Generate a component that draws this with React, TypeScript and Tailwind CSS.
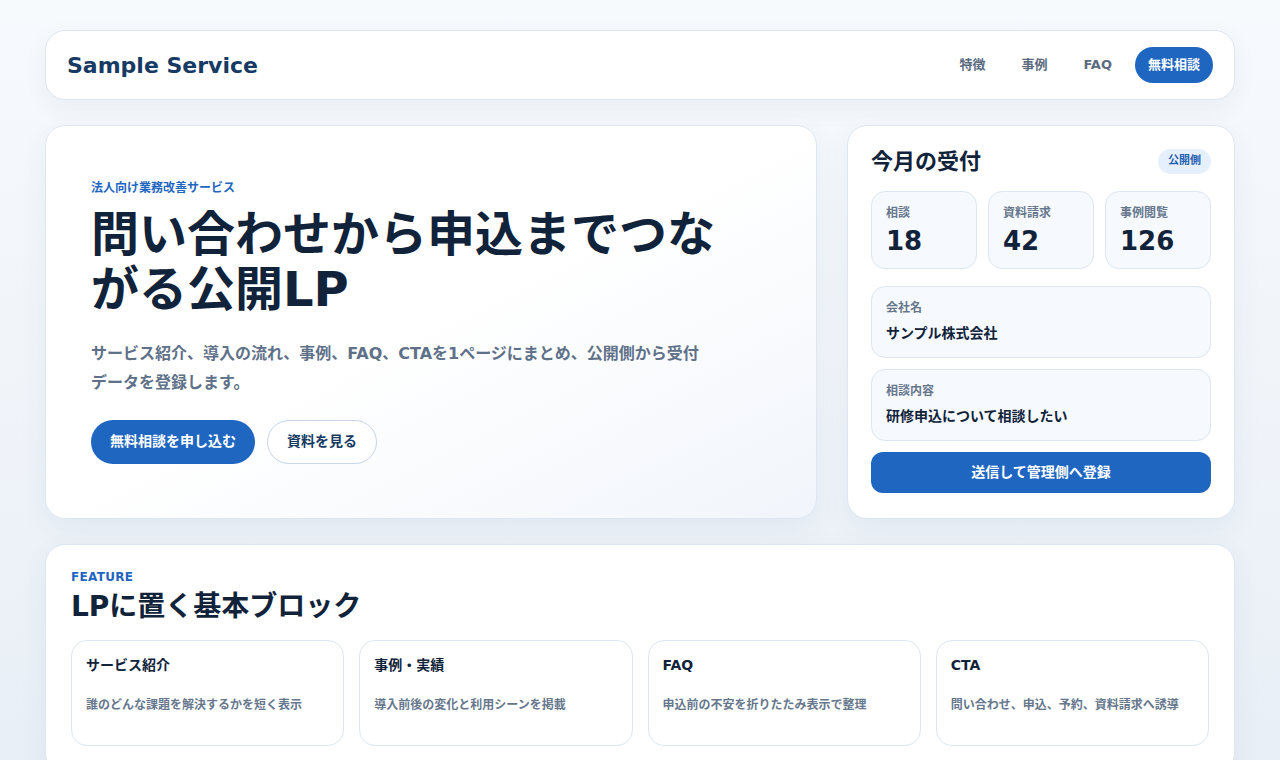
import React from 'react';

const stats = [
  { label: '相談', value: '18' },
  { label: '資料請求', value: '42' },
  { label: '事例閲覧', value: '126' },
];

const blocks = [
  { title: 'サービス紹介', desc: '誰のどんな課題を解決するかを短く表示' },
  { title: '事例・実績', desc: '導入前後の変化と利用シーンを掲載' },
  { title: 'FAQ', desc: '申込前の不安を折りたたみ表示で整理' },
  { title: 'CTA', desc: '問い合わせ、申込、予約、資料請求へ誘導' },
];

const App: React.FC = () => {
  return (
    <div
      className="min-h-screen bg-gradient-to-b from-[#f7fafd] to-[#e8eef6] px-[45px] pt-[30px] pb-10 text-[#10233a]"
      style={{ fontFamily: '"DejaVu Sans", "Noto Sans CJK JP", sans-serif' }}
    >
      {/* Header */}
      <header className="flex h-[70px] items-center justify-between rounded-[20px] border border-[#dde6f1] bg-white pl-[21px] pr-[21px] shadow-[0_8px_24px_rgba(30,60,110,0.06)]">
        <div className="text-[22px] font-bold text-[#163a63]">Sample Service</div>
        <nav className="flex items-center gap-[10px] text-[13px] font-bold text-[#5a6b80]">
          <a className="px-[13px] py-2">特徴</a>
          <a className="px-[13px] py-2">事例</a>
          <a className="px-[13px] py-2">FAQ</a>
          <a className="flex h-9 items-center rounded-full bg-[#1f66c1] px-[13px] text-white">無料相談</a>
        </nav>
      </header>

      {/* Hero */}
      <section className="mt-[25px] grid grid-cols-[772px_388px] gap-[30px]">
        <div className="flex flex-col justify-center rounded-[20px] border border-[#dde6f1] bg-gradient-to-br from-white via-white to-[#f1f5fb] px-[45px] pb-[2px] shadow-[0_10px_30px_rgba(30,60,110,0.06)]">
          <p className="text-[12px] font-bold text-[#1f66c1]">法人向け業務改善サービス</p>
          <h1 className="mt-[10px] max-w-[640px] text-[48px] font-bold leading-[55px] text-[#10233a]">
            問い合わせから申込までつながる公開LP
          </h1>
          <p className="mt-[22px] max-w-[620px] text-[16px] font-bold leading-[29px] text-[#5f7189]">
            サービス紹介、導入の流れ、事例、FAQ、CTAを1ページにまとめ、公開側から受付データを登録します。
          </p>
          <div className="mt-[23px] flex gap-3">
            <button className="h-11 rounded-full bg-[#1f66c1] px-[19px] text-[14px] font-bold text-white">無料相談を申し込む</button>
            <button className="h-11 rounded-full border border-[#c6d5ea] bg-white px-[19px] text-[14px] font-bold text-[#163a63]">資料を見る</button>
          </div>
        </div>

        <aside className="rounded-[20px] border border-[#dde6f1] bg-white px-[23px] pt-[19px] pb-[25px] shadow-[0_10px_30px_rgba(30,60,110,0.06)]">
          <div className="flex items-center justify-between">
            <h2 className="text-[22px] font-bold text-[#10233a]">今月の受付</h2>
            <span className="rounded-full bg-[#e6f0fc] px-[10px] py-[4px] text-[11px] font-bold text-[#1f5fb0]">公開側</span>
          </div>
          <div className="mt-[13px] grid grid-cols-3 gap-[11px]">
            {stats.map(s => (
              <div key={s.label} className="h-[78px] rounded-[14px] border border-[#dde6f1] bg-[#f6f9fd] px-[14px] pt-[12px]">
                <div className="text-[12px] font-bold text-[#66778d]">{s.label}</div>
                <div className="mt-[2px] text-[26px] font-bold leading-[34px] text-[#10233a]">{s.value}</div>
              </div>
            ))}
          </div>
          <div className="mt-[17px] flex flex-col gap-[11px]">
            <div className="h-[72px] rounded-[14px] border border-[#dde6f1] bg-[#f6f9fd] px-[14px] pt-[12px]">
              <div className="text-[12px] font-bold text-[#66778d]">会社名</div>
              <div className="mt-[6px] text-[14px] font-bold text-[#10233a]">サンプル株式会社</div>
            </div>
            <div className="h-[72px] rounded-[14px] border border-[#dde6f1] bg-[#f6f9fd] px-[14px] pt-[12px]">
              <div className="text-[12px] font-bold text-[#66778d]">相談内容</div>
              <div className="mt-[6px] text-[14px] font-bold text-[#10233a]">研修申込について相談したい</div>
            </div>
            <button className="h-[41px] rounded-[12px] bg-[#1f66c1] text-[14px] font-bold text-white">送信して管理側へ登録</button>
          </div>
        </aside>
      </section>

      {/* Feature */}
      <section className="mt-[25px] rounded-[20px] border border-[#dde6f1] bg-white px-[25px] pt-[23px] pb-[26px] shadow-[0_10px_30px_rgba(30,60,110,0.06)]">
        <p className="text-[12px] font-bold tracking-[0.3px] text-[#1f66c1]">FEATURE</p>
        <h2 className="mt-[2px] text-[28px] font-bold leading-[38px] text-[#10233a]">LPに置く基本ブロック</h2>
        <div className="mt-[14px] grid grid-cols-4 gap-[15px]">
          {blocks.map(b => (
            <div key={b.title} className="h-[106px] rounded-[16px] border border-[#dde6f1] bg-white px-[14px] pt-[14px]">
              <div className="text-[14px] font-bold text-[#10233a]">{b.title}</div>
              <div className="mt-[20px] text-[12px] font-bold text-[#66778d]">{b.desc}</div>
            </div>
          ))}
        </div>
      </section>
    </div>
  );
};

export default App;
